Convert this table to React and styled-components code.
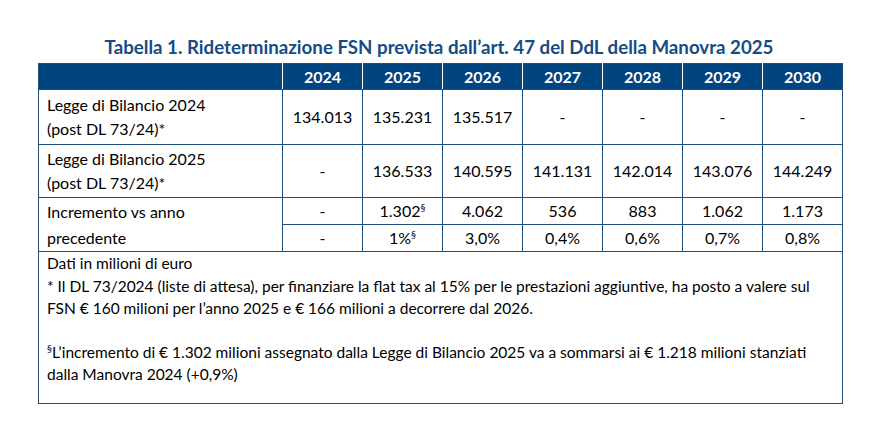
import styled, { createGlobalStyle } from 'styled-components';

const Global = createGlobalStyle`
  html, body {
    margin: 0;
    padding: 0;
    background: #ffffff;
  }
`;

const Page = styled.div`
  padding: 36px 0 0 38px;
  font-family: Lato, "Liberation Sans", sans-serif;
  color: #000000;
`;

const Box = styled.div`
  width: 802px;
`;

const Title = styled.h1`
  margin: 0 0 5px 0;
  text-align: center;
  font-size: 18.7px;
  line-height: 22px;
  font-weight: 700;
  color: #144c85;
`;

const Table = styled.table`
  width: 802px;
  table-layout: fixed;
  border-collapse: collapse;
  font-size: 16px;
`;

const HeadCell = styled.th`
  height: 25px;
  padding: 0;
  background: #00457f;
  color: #ffffff;
  font-weight: 700;
  text-align: center;
  border-top: 1px solid #1f4e79;
  border-bottom: 1px solid #1f4e79;
  border-left: 1px solid #ffffff;
  border-right: 1px solid #ffffff;
  &:first-child { border-left-color: #1f4e79; }
  &:last-child { border-right-color: #1f4e79; }
`;

const Cell = styled.td`
  height: ${(p) => p.$h || 26}px;
  padding: 0;
  text-align: center;
  vertical-align: middle;
  border: 1px solid #1f4e79;
  line-height: 24px;
`;

const LabelCell = styled(Cell)`
  text-align: left;
  padding: 0 8px;
  line-height: ${(p) => p.$lh || 24}px;
`;

const NoteCell = styled.td`
  height: 151px;
  padding: 0 8px;
  vertical-align: top;
  border: 1px solid #1f4e79;
  font-size: 15.5px;
  line-height: 22.5px;
  white-space: nowrap;
`;

const Gap = styled.div`
  height: 21px;
`;

const Sup = styled.sup`
  font-size: 10px;
  line-height: 0;
  vertical-align: 6px;
`;

const years = ['2024', '2025', '2026', '2027', '2028', '2029', '2030'];

const rows = [
  {
    label: ['Legge di Bilancio 2024', '(post DL 73/24)*'],
    values: ['134.013', '135.231', '135.517', '-', '-', '-', '-'],
    h: 54,
  },
  {
    label: ['Legge di Bilancio 2025', '(post DL 73/24)*'],
    values: ['-', '136.533', '140.595', '141.131', '142.014', '143.076', '144.249'],
    h: 52,
  },
];

const incrAbs = ['-', '1.302§', '4.062', '536', '883', '1.062', '1.173'];
const incrPct = ['-', '1%§', '3,0%', '0,4%', '0,6%', '0,7%', '0,8%'];

const renderValue = (v) => {
  if (v.endsWith('§')) {
    return (
      <>
        {v.slice(0, -1)}
        <Sup>§</Sup>
      </>
    );
  }
  return v;
};

const App = () => {
  return (
    <>
      <Global />
      <Page>
        <Box>
          <Title>Tabella 1. Rideterminazione FSN prevista dall’art. 47 del DdL della Manovra 2025</Title>
          <Table>
            <colgroup>
              <col style={{ width: 244 }} />
              {years.map((y) => (
                <col key={y} style={{ width: 80 }} />
              ))}
            </colgroup>
            <thead>
              <tr>
                <HeadCell></HeadCell>
                {years.map((y) => (
                  <HeadCell key={y}>{y}</HeadCell>
                ))}
              </tr>
            </thead>
            <tbody>
              {rows.map((r, i) => (
                <tr key={i}>
                  <LabelCell $h={r.h}>
                    {r.label[0]}
                    <br />
                    {r.label[1]}
                  </LabelCell>
                  {r.values.map((v, j) => (
                    <Cell key={j} $h={r.h}>{v}</Cell>
                  ))}
                </tr>
              ))}
              <tr>
                <LabelCell rowSpan={2} $lh={26}>
                  Incremento vs anno
                  <br />
                  precedente
                </LabelCell>
                {incrAbs.map((v, j) => (
                  <Cell key={j} $h={26}>{renderValue(v)}</Cell>
                ))}
              </tr>
              <tr>
                {incrPct.map((v, j) => (
                  <Cell key={j} $h={26}>{renderValue(v)}</Cell>
                ))}
              </tr>
              <tr>
                <NoteCell colSpan={8}>
                  Dati in milioni di euro
                  <br />
                  * Il DL 73/2024 (liste di attesa), per finanziare la flat tax al 15% per le prestazioni aggiuntive, ha posto a valere sul
                  <br />
                  FSN € 160 milioni per l’anno 2025 e € 166 milioni a decorrere dal 2026.
                  <Gap />
                  <Sup>§</Sup>L’incremento di € 1.302 milioni assegnato dalla Legge di Bilancio 2025 va a sommarsi ai € 1.218 milioni stanziati
                  <br />
                  dalla Manovra 2024 (+0,9%)
                </NoteCell>
              </tr>
            </tbody>
          </Table>
        </Box>
      </Page>
    </>
  );
};

export default App;
